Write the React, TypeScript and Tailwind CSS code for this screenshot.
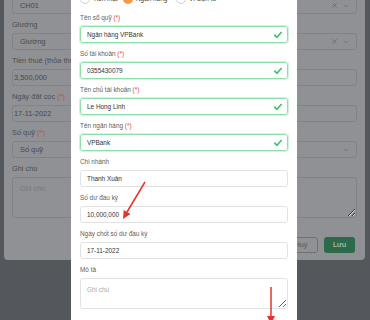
import React from 'react';
import { X, ChevronDown } from 'lucide-react';

interface Field {
    label: string;
    required?: boolean;
    value: string;
    valid?: boolean;
}

const frontFields: Field[] = [
    { label: 'Tên sổ quỹ', required: true, value: 'Ngân hàng VPBank', valid: true },
    { label: 'Số tài khoản', required: true, value: '0355430079', valid: true },
    { label: 'Tên chủ tài khoản', required: true, value: 'Le Hong Linh', valid: true },
    { label: 'Tên ngân hàng', required: true, value: 'VPBank', valid: true },
    { label: 'Chi nhánh', value: 'Thanh Xuân' },
    { label: 'Số dư đầu kỳ', value: '10,000,000' },
    { label: 'Ngày chốt số dư đầu kỳ', value: '17-11-2022' },
];

const Check = () => (
    <svg width="8" height="7" viewBox="0 0 8 7" className="absolute right-[5px] top-1/2 -translate-y-1/2">
        <polyline points="0.8,3.6 3,5.8 7.2,1" fill="none" stroke="#3cc46b" strokeWidth="1.7" strokeLinecap="round" strokeLinejoin="round" />
    </svg>
);

const Radio = ({ label, checked, className }: { label: string; checked?: boolean; className?: string }) => (
    <div className={`flex items-center gap-[3px] ${className ?? ''}`}>
        {checked ? (
            <span className="w-[10px] h-[10px] rounded-full bg-[#f39a4b] shrink-0" />
        ) : (
            <span className="w-[10px] h-[10px] rounded-full border border-[#cfcfcf] bg-white shrink-0" />
        )}
        <span className="text-[#444]">{label}</span>
    </div>
);

const BackLabel = ({ text, required }: { text: string; required?: boolean }) => (
    <div className="h-[9px] leading-[9px] mt-[6px] mb-[4px] text-[#4c4f52] whitespace-nowrap">
        {text} {required && <span className="text-[#b3554f]">(*)</span>}
    </div>
);

const BackSelect = ({ value, clear }: { value: string; clear?: boolean }) => (
    <div className="h-[17px] rounded-[3px] border border-[#818487] flex items-center pl-[7px] pr-[6px] text-[#46494c]">
        <span className="flex-1">{value}</span>
        {clear && <X size={7} strokeWidth={3} className="text-[#66696c] mr-[4px]" />}
        <ChevronDown size={8} strokeWidth={2} className="text-[#66696c]" />
    </div>
);

const BackInput = ({ value }: { value: string }) => (
    <div className="h-[17px] rounded-[3px] border border-[#818487] flex items-center pl-[1px] text-[#46494c]">
        {value}
    </div>
);

export default function App() {
    return (
        <div className="relative w-[370px] h-[320px] overflow-hidden bg-[#54585c] font-['Liberation_Sans',Arial,sans-serif]">
            {/* Back modal (under backdrop) */}
            <div className="absolute left-[4px] top-0 w-[361px] h-[260px] bg-[#8f9194] rounded-b-[4px] overflow-hidden text-[7.4px]">
                <div className="-mt-[3px] px-[8px] flex flex-col">
                    <BackSelect value="CH01" clear />
                    <BackLabel text="Giường" />
                    <BackSelect value="Giường" clear />
                    <BackLabel text="Tiền thuê (thỏa thuận)" />
                    <BackInput value="3,500,000" />
                    <BackLabel text="Ngày đặt cọc" required />
                    <BackInput value="17-11-2022" />
                    <BackLabel text="Số quỹ" required />
                    <BackSelect value="Số quỹ" />
                    <BackLabel text="Ghi chú" />
                    <textarea
                        readOnly
                        placeholder="Ghi chú"
                        className="h-[41px] rounded-[3px] border border-[#818487] bg-transparent px-[7px] py-[5px] text-[7.4px] placeholder:text-[#76797c] outline-none"
                    />
                    <div className="flex justify-end gap-[6px] mt-[19px] mr-[2px]">
                        <div className="h-[16px] w-[34px] rounded-[3px] border border-[#6f7275] flex items-center justify-center text-[#55585b]">
                            Huỷ
                        </div>
                        <div className="h-[16px] w-[31px] rounded-[3px] bg-[#2d6a4b] flex items-center justify-center text-[#cdd6d1]">
                            Lưu
                        </div>
                    </div>
                </div>
            </div>

            {/* Front modal */}
            <div className="absolute left-[71px] top-0 w-[226px] h-[320px] bg-white overflow-hidden text-[6.4px]">
                <div className="-mt-[6px] px-[9px] flex flex-col">
                    <div className="flex items-center h-[10px] mb-[9px]">
                        <Radio label="Tiền mặt" className="w-[43px]" />
                        <Radio label="Ngân hàng" checked className="w-[53px]" />
                        <Radio label="Ví điện tử" />
                    </div>
                    {frontFields.map((f) => (
                        <div key={f.label} className="mb-[6px]">
                            <div className="h-[9px] leading-[9px] mb-[4px] text-[#5e5e5e]">
                                {f.label} {f.required && <span className="text-[#e8463c]">(*)</span>}
                            </div>
                            <div
                                className={`relative h-[17px] rounded-[3px] flex items-center pl-[6px] text-[#333] ${
                                    f.valid
                                        ? 'border border-[#8fdfab] shadow-[0_0_0_1px_#d3f3de]'
                                        : 'border border-[#e2e2e2]'
                                }`}
                            >
                                {f.value}
                                {f.valid && <Check />}
                            </div>
                        </div>
                    ))}
                    <div className="h-[9px] leading-[9px] mb-[4px] text-[#5e5e5e]">Mô tả</div>
                    <textarea
                        readOnly
                        placeholder="Ghi chú"
                        className="h-[31px] rounded-[3px] border border-[#e2e2e2] px-[6px] py-[6px] text-[6.4px] placeholder:text-[#aaa] outline-none"
                    />
                </div>
            </div>

            {/* Red annotation arrows */}
            <svg className="absolute inset-0 pointer-events-none" width="370" height="320" viewBox="0 0 370 320">
                <line x1="145" y1="182" x2="127" y2="212" stroke="#e5332a" strokeWidth="1.5" />
                <polygon points="123,219 130.5,214.1 123.7,210.1" fill="#e5332a" />
                <line x1="271" y1="287" x2="271" y2="317" stroke="#e5332a" strokeWidth="1.5" />
                <polygon points="267,316 275,316 271,324" fill="#e5332a" />
            </svg>
        </div>
    );
}
